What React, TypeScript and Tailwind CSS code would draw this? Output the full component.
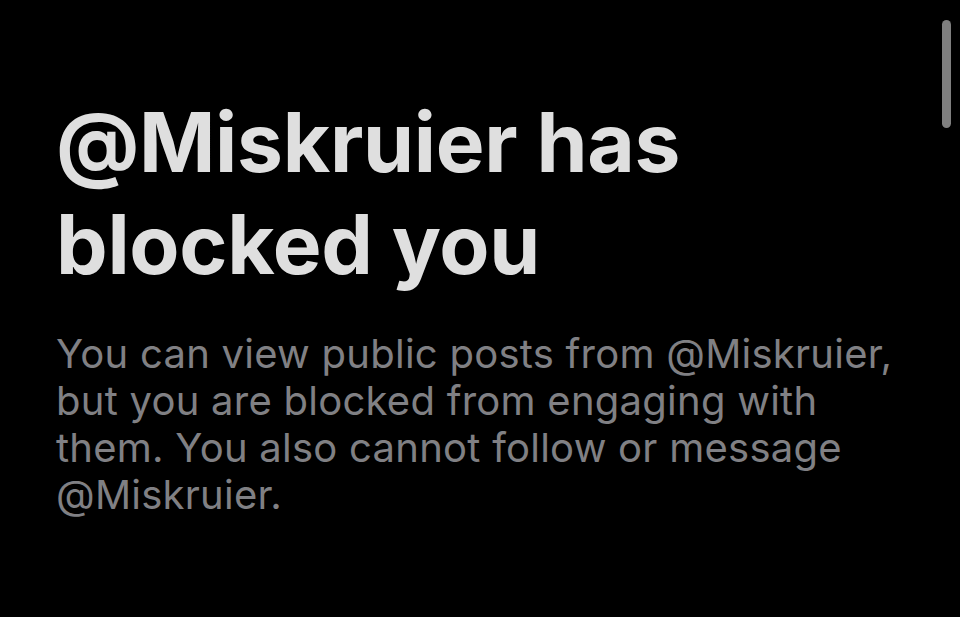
export default function App() {
  return (
    <div className="relative h-[617px] w-[960px] overflow-hidden bg-black font-['Inter','Noto_Sans',sans-serif]">
      {/* scroll indicator */}
      <div className="absolute right-[9px] top-[20px] h-[108px] w-[9px] rounded-full bg-[#7f7f7f]" />

      <div className="flex flex-col pl-[56px] pt-[92px]">
        <h1 className="text-[82px] font-bold leading-[102px] tracking-[-0.3px] text-[#dfdfdf]">
          @Miskruier has
          <br />
          blocked you
        </h1>
        <p className="mt-[34px] w-[900px] text-[40px] leading-[47px] tracking-[0.25px] text-[#808084]">
          You can view public posts from @Miskruier,
          <br />
          but you are blocked from engaging with
          <br />
          them. You also cannot follow or message
          <br />
          @Miskruier.
        </p>
      </div>
    </div>
  );
}
